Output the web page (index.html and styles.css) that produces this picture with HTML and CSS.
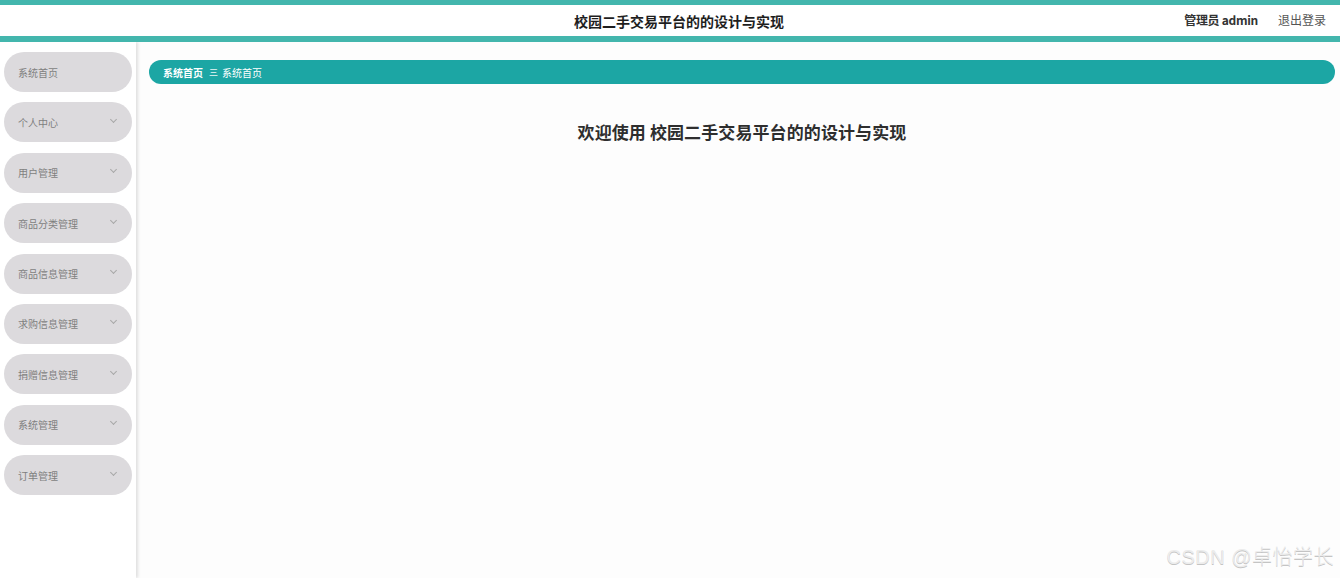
FILE: index.html
```html
<!DOCTYPE html>
<html lang="zh-CN">
<head>
    <meta charset="UTF-8">
    <title>校园二手交易平台的的设计与实现</title>
    <link rel="stylesheet" href="styles.css">
</head>
<body>
<div class="header">
    <div class="title">校园二手交易平台的的设计与实现</div>
    <div class="user">
        <span class="name">管理员 admin</span>
        <span class="logout">退出登录</span>
    </div>
</div>
<div class="wrap">
    <ul class="menu">
        <li><span>系统首页</span></li>
        <li><span>个人中心</span><i class="arrow"></i></li>
        <li><span>用户管理</span><i class="arrow"></i></li>
        <li><span>商品分类管理</span><i class="arrow"></i></li>
        <li><span>商品信息管理</span><i class="arrow"></i></li>
        <li><span>求购信息管理</span><i class="arrow"></i></li>
        <li><span>捐赠信息管理</span><i class="arrow"></i></li>
        <li><span>系统管理</span><i class="arrow"></i></li>
        <li><span>订单管理</span><i class="arrow"></i></li>
    </ul>
    <div class="main">
        <div class="crumb">
            <b>系统首页</b>
            <em>三</em>
            <span>系统首页</span>
        </div>
        <h1 class="welcome">欢迎使用 校园二手交易平台的的设计与实现</h1>
    </div>
</div>
<div class="mark">CSDN @卓怡学长</div>
</body>
</html>
```

FILE: styles.css
```css
* {
    padding: 0;
    margin: 0;
    list-style: none;
    box-sizing: border-box;
}

body {
    width: 1340px;
    height: 578px;
    overflow: hidden;
    font-family: "Noto Sans CJK SC", "Liberation Sans", sans-serif;
    background: #fdfdfd;
    position: relative;
}

.header {
    height: 42px;
    border-top: 5px solid #43b6ad;
    border-bottom: 6px solid #43b6ad;
    background: #fff;
    display: flex;
    align-items: center;
    justify-content: center;
    position: relative;
}

.header .title {
    font-size: 14px;
    font-weight: bold;
    color: #1e1e1e;
    margin-left: 18px;
}

.header .user {
    position: absolute;
    right: 14px;
    top: 6px;
    font-size: 12px;
    display: flex;
    gap: 20px;
}

.header .name {
    font-weight: bold;
    color: #333;
    font-family: "Noto Sans CJK SC", "Open Sans", sans-serif;
    letter-spacing: -0.3px;
}

.header .logout {
    color: #555;
}

.wrap {
    display: flex;
    height: 536px;
}

.menu {
    width: 136px;
    background: #fff;
    padding: 10px 4px 0 4px;
    box-shadow: 2px 0 3px rgba(0, 0, 0, 0.12);
    flex-shrink: 0;
}

.menu li {
    height: 40px;
    margin-bottom: 10.4px;
    border-radius: 20px;
    background: #dcdadd;
    display: flex;
    align-items: center;
    justify-content: space-between;
    padding: 0 16px 0 14px;
    font-size: 10px;
    color: #7f7f7f;
}

.menu .arrow {
    width: 5px;
    height: 5px;
    border-right: 1px solid #a8a8a8;
    border-bottom: 1px solid #a8a8a8;
    transform: rotate(45deg);
    margin-top: -6px;
}

.main {
    flex: 1;
    padding: 18px 5px 0 13px;
}

.crumb {
    height: 24px;
    border-radius: 12px;
    background: #1ca6a4;
    display: flex;
    align-items: center;
    padding-left: 14px;
    font-size: 10px;
    color: #fff;
}

.crumb em {
    font-style: normal;
    margin: 0 4px 0 6px;
    font-size: 9px;
    opacity: 0.9;
}

.welcome {
    text-align: center;
    font-size: 17px;
    font-weight: bold;
    color: #2e2e2e;
    margin-top: 35px;
    letter-spacing: 0.1px;
}

.mark {
    position: absolute;
    right: 6px;
    bottom: 8px;
    font-size: 20px;
    color: #ececec;
    text-shadow: 0 1px 0 #c4c4c4;
    font-family: "Liberation Sans", "Noto Sans CJK SC", sans-serif;
    font-weight: 300;
    letter-spacing: 0.5px;
}
```
